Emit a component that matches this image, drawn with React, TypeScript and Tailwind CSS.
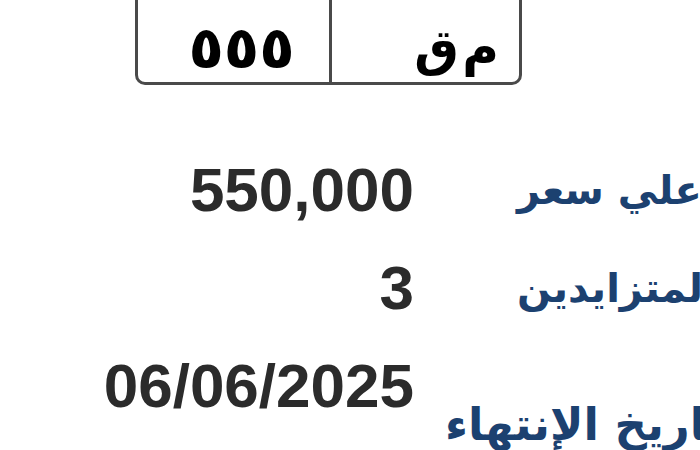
import React from "react";

const ar = { fontFamily: '"DejaVu Sans", "Noto Sans", sans-serif' };

export default function App() {
  return (
    <div className="w-[700px] h-[450px] overflow-hidden bg-white">
      <div className="ml-[135px] mt-[-20px] w-[387px] h-[105px] border-[3px] border-[#4a4a4a] rounded-b-[10px] flex">
        <div className="w-[194px] border-r-[3px] border-[#4a4a4a] flex items-center justify-center pt-[30px] pl-[16px]">
          <span dir="rtl" className="text-[58px] font-bold text-black leading-none tracking-[2px]" style={ar}>
            ٥٥٥
          </span>
        </div>
        <div className="flex-1 flex items-center justify-end pt-[30px] pr-[20px]">
          <span dir="rtl" className="text-[50px] font-bold text-black leading-none [word-spacing:-14px]" style={ar}>
            م ق
          </span>
        </div>
      </div>

      <div className="mt-[56px] flex flex-col">
        <Row value="550,000" label="أعلي سعر" ml="ml-[103px]" size="text-[40px]" />
        <Row value="3" label="عدد المتزايدين" ml="ml-[103px]" size="text-[40px]" />
        <Row value="06/06/2025" label="تاريخ الإنتهاء" ml="ml-[31px] mt-[76px]" size="text-[45px]" />
      </div>
    </div>
  );
}

function Row({ value, label, ml, size }: { value: string; label: string; ml: string; size: string }) {
  return (
    <div className="h-[98px] flex items-center">
      <div
        className="w-[414px] shrink-0 text-right text-[62px] leading-none font-bold text-[#2b2b2b]"
        style={{ fontFamily: '"Liberation Sans", Arial, sans-serif' }}
      >
        {value}
      </div>
      <div className={"flex justify-start " + ml}>
        <span
          dir="rtl"
          className={"whitespace-nowrap leading-none font-bold text-[#1c4170] " + size}
          style={ar}
        >
          {label}
        </span>
      </div>
    </div>
  );
}
